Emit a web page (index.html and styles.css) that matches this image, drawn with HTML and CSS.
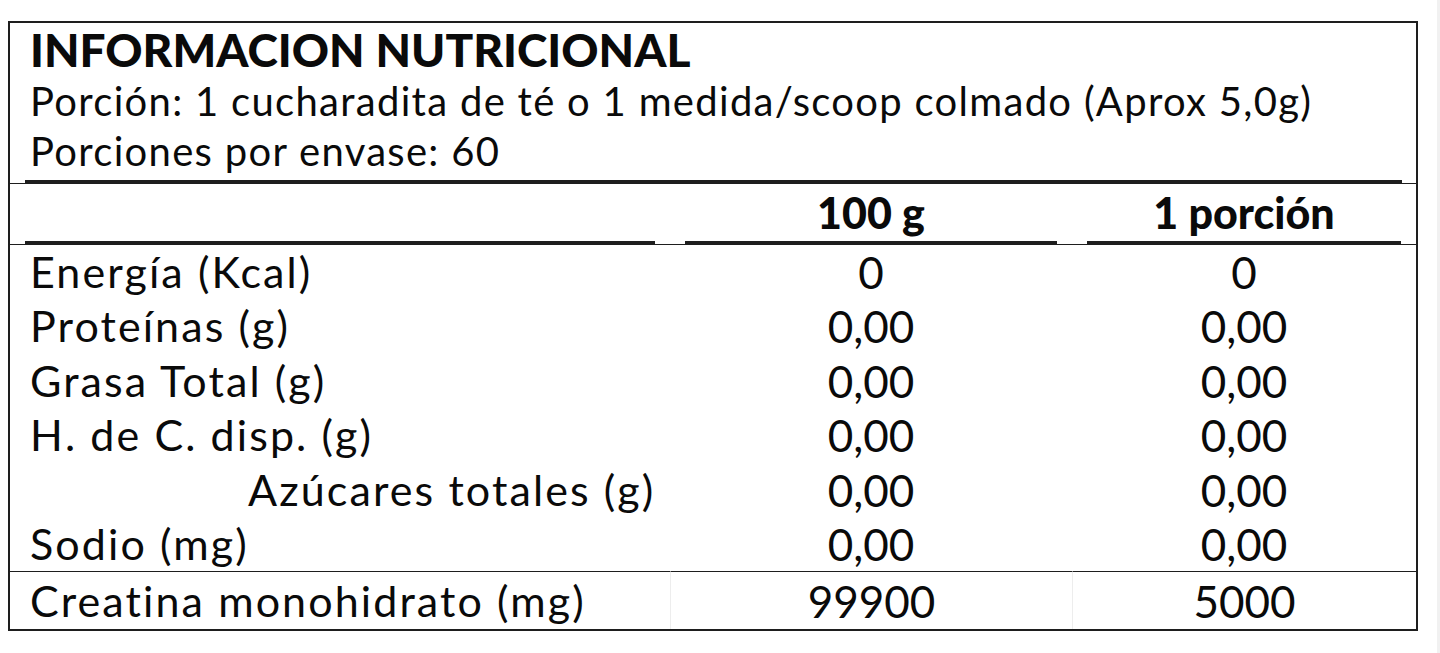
FILE: index.html
```html
<!DOCTYPE html>
<html lang="es">
<head>
<meta charset="utf-8">
<title>Informacion nutricional</title>
<link rel="stylesheet" href="styles.css">
</head>
<body>
<div class="label">
  <div class="intro">
    <div class="intro-inner">
      <div class="title">INFORMACION NUTRICIONAL</div>
      <div class="line">Porción: 1 cucharadita de té o 1 medida/scoop colmado (Aprox 5,0g)</div>
      <div class="line">Porciones por envase: 60</div>
    </div>
  </div>
  <div class="grid">
    <div class="hcell"><div class="hin">&nbsp;</div></div>
    <div class="hcell"><div class="hin">100 g</div></div>
    <div class="hcell"><div class="hin">1 porción</div></div>

    <div class="cell name">Energía (Kcal)</div><div class="cell val">0</div><div class="cell val">0</div>
    <div class="cell name">Proteínas (g)</div><div class="cell val">0,00</div><div class="cell val">0,00</div>
    <div class="cell name">Grasa Total (g)</div><div class="cell val">0,00</div><div class="cell val">0,00</div>
    <div class="cell name">H. de C. disp. (g)</div><div class="cell val">0,00</div><div class="cell val">0,00</div>
    <div class="cell name sub">Azúcares totales (g)</div><div class="cell val">0,00</div><div class="cell val">0,00</div>
    <div class="cell name">Sodio (mg)</div><div class="cell val">0,00</div><div class="cell val">0,00</div>

    <div class="fcell name">Creatina monohidrato (mg)</div><div class="fcell val sep">99900</div><div class="fcell val sep">5000</div>
  </div>
</div>
</body>
</html>
```

FILE: styles.css
```css
html, body {
  margin: 0;
  padding: 0;
  background: #ffffff;
}
body {
  box-sizing: border-box;
  min-height: 100vh;
  padding: 21px 0 0 8px;
  border-right: 3px solid #f1f1f1;
  font-family: "Lato", "Open Sans", sans-serif;
  color: #0a0a0a;
}
.label {
  width: 1406px;
  border: 2px solid #1e1e1e;
}
.intro {
  border-bottom: 1px solid #1e1e1e;
}
.intro-inner {
  margin: 0 14px 0 15px;
  padding: 0 0 4px 5px;
  border-bottom: 3px solid #1e1e1e;
}
.title {
  font-weight: 900;
  font-size: 46px;
  line-height: 53px;
}
.line {
  font-size: 40px;
  line-height: 50px;
  letter-spacing: 1.3px;
}
.grid {
  display: grid;
  grid-template-columns: 660px 402px 1fr;
}
.hcell {
  border-bottom: 1px solid #1e1e1e;
}
.hin {
  margin: 0 15px;
  border-bottom: 3px solid #1e1e1e;
  font-weight: 900;
  font-size: 43px;
  line-height: 57px;
  text-align: center;
}
.cell, .fcell {
  line-height: 54.4px;
}
.fcell {
  border-top: 1px solid #1e1e1e;
  line-height: 56px;
  padding-top: 1px;
}
.name {
  padding-left: 20px;
  font-size: 43px;
  letter-spacing: 2.1px;
}
.sub {
  padding-left: 238px;
}
.val {
  text-align: center;
  font-size: 44px;
}
.sep {
  border-left: 1px solid #ededed;
}
```
